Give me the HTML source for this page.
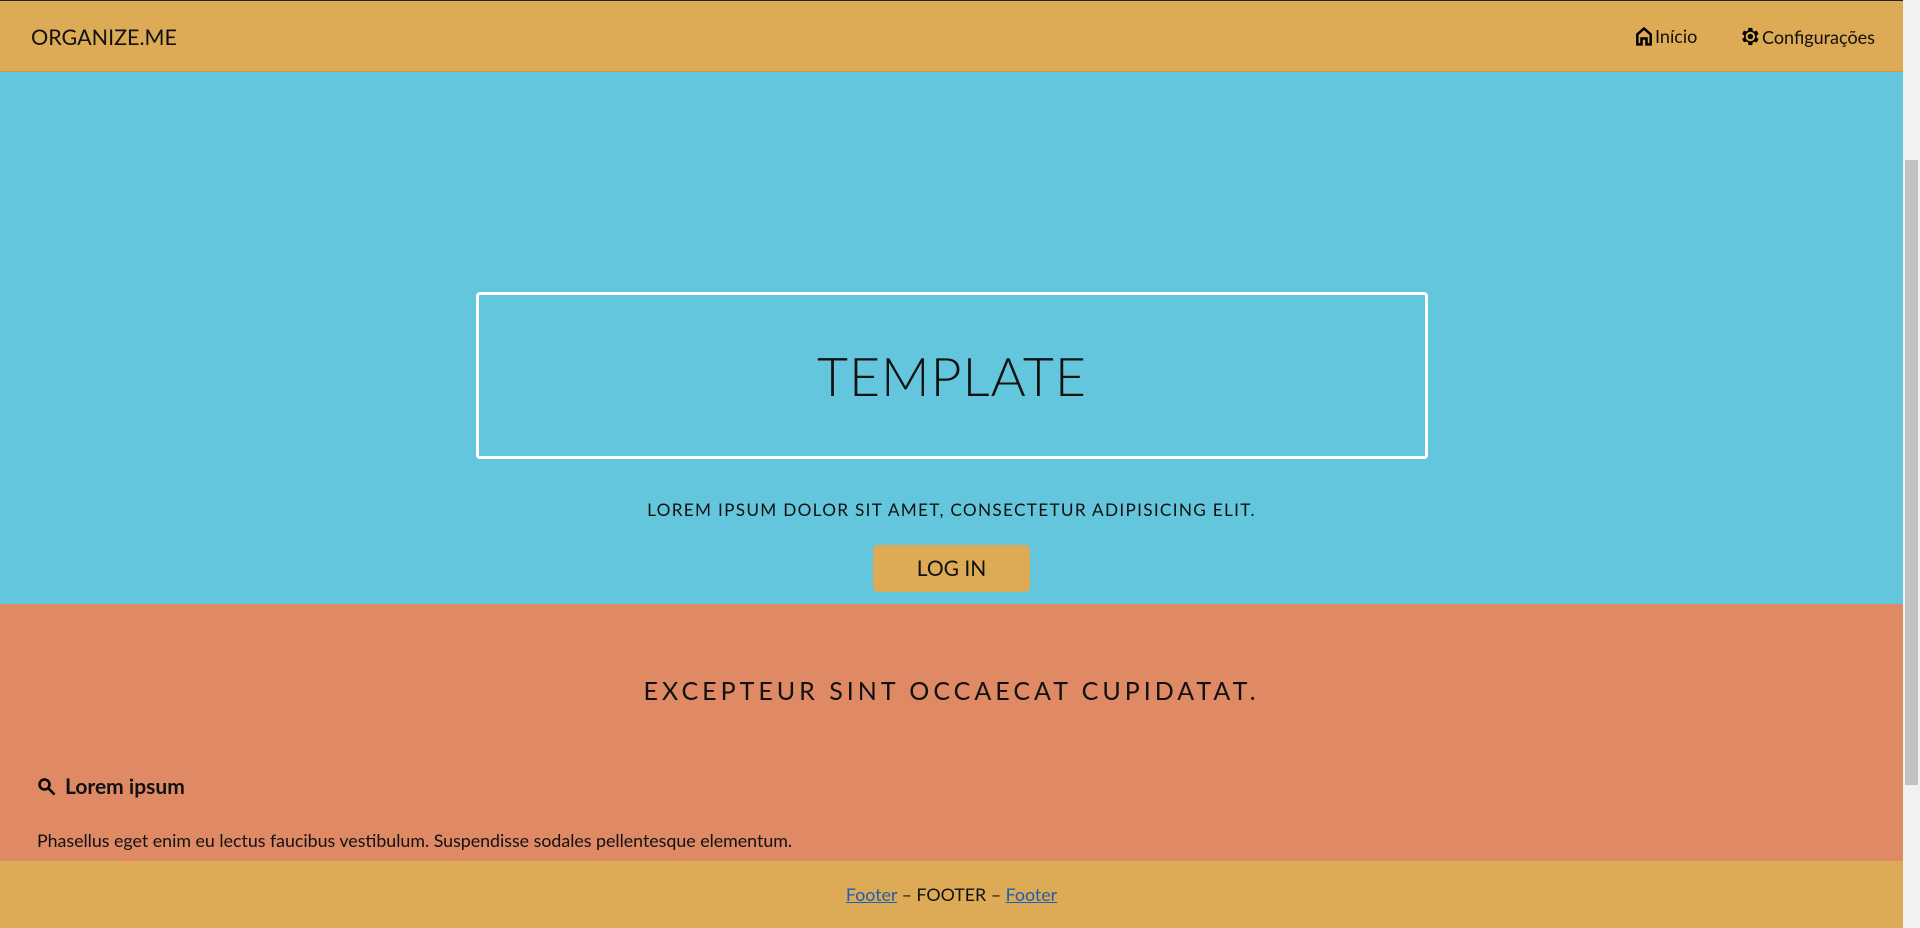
<!DOCTYPE html>
<html><head><meta charset="utf-8"><style>
*{margin:0;padding:0;box-sizing:border-box}
html,body{width:1920px;height:928px;overflow:hidden;font-family:"Lato","Liberation Sans",sans-serif;color:#111}
.page{position:absolute;left:0;top:0;width:1903px;height:928px;border-top:1px solid #222;border-bottom:1px solid #222}
.sb{position:absolute;right:0;top:0;width:17px;height:928px;background:#f1f1f1}
.sb .th{position:absolute;left:2px;right:2px;top:160px;height:625px;background:#c1c1c1}
nav{position:absolute;left:0;top:0;width:1903px;height:71px;background:#DDAA55;border-bottom:1px solid #c99a48}
.brand{position:absolute;left:31px;top:23px;font-size:21.5px}
.nl{position:absolute;top:24px;font-size:18px;display:flex;align-items:center;gap:1px}
.hero{position:absolute;left:0;top:71px;width:1903px;height:532px;background:#64C6DD}
.box{position:absolute;left:476px;top:220px;width:952px;height:167px;border:3px solid #fff;border-radius:4px;display:flex;align-items:center;justify-content:center;font-size:53.5px;font-weight:300;letter-spacing:1px}
.sub{position:absolute;left:0;width:1903px;top:427px;text-align:center;font-size:17.2px;letter-spacing:1.3px}
.btn{position:absolute;left:873px;top:473px;width:157px;height:47px;background:#DDAA55;border-radius:5px;display:flex;align-items:center;justify-content:center;font-size:21px}
.sec{position:absolute;left:0;top:603px;width:1903px;height:257px;background:#DF8965}
.sec h2{position:absolute;left:0;width:1903px;top:72px;text-align:center;font-weight:400;font-size:25px;letter-spacing:4px}
.sec h3{position:absolute;left:37px;top:170px;font-size:21px;display:flex;align-items:center;gap:8px}
.sec p{position:absolute;left:37px;top:225px;font-size:17.8px}
footer{position:absolute;left:0;top:860px;width:1903px;height:67px;background:#DDAA55;text-align:center;line-height:67px;font-size:17.8px}
footer a{color:#1a5fb4}
</style></head><body>
<div class="page">
<nav><div class="brand">ORGANIZE.ME</div>
<div class="nl" style="left:1634px"><svg width="20" height="20" viewBox="0 0 24 24" fill="none" stroke="#000" stroke-width="3"><path d="M4 22V10L12 3l8 7v12h-5v-7H9v7z"/></svg>Início</div>
<div class="nl" style="left:1738px"><svg width="23" height="23" viewBox="0 0 24 24"><path fill="#000" fill-rule="evenodd" d="M19.4 13a7.5 7.5 0 000-2l2.1-1.6-2-3.5-2.5 1a7.7 7.7 0 00-1.7-1L14.9 3h-4l-.4 2.8a7.7 7.7 0 00-1.7 1l-2.5-1-2 3.5L6.4 11a7.5 7.5 0 000 2l-2.1 1.6 2 3.5 2.5-1a7.7 7.7 0 001.7 1l.4 2.9h4l.4-2.8a7.7 7.7 0 001.7-1l2.5 1 2-3.5zM12.9 17a5 5 0 110-10 5 5 0 010 10z"/><circle cx="12.9" cy="12" r="2.8" fill="#000"/></svg>Configurações</div>
</nav>
<div class="hero">
<div class="box">TEMPLATE</div>
<div class="sub">LOREM IPSUM DOLOR SIT AMET, CONSECTETUR ADIPISICING ELIT.</div>
<div class="btn">LOG IN</div>
</div>
<div class="sec">
<h2>EXCEPTEUR SINT OCCAECAT CUPIDATAT.</h2>
<h3><svg width="20" height="20" viewBox="0 0 24 24" fill="none" stroke="#000" stroke-width="3"><circle cx="9" cy="9" r="6"/><path d="M13.5 13.5L21 21"/></svg>Lorem ipsum</h3>
<p>Phasellus eget enim eu lectus faucibus vestibulum. Suspendisse sodales pellentesque elementum.</p>
</div>
<footer><a href="#">Footer</a> – FOOTER – <a href="#">Footer</a></footer>
</div>
<div class="sb"><div class="th"></div></div>
</body></html>
